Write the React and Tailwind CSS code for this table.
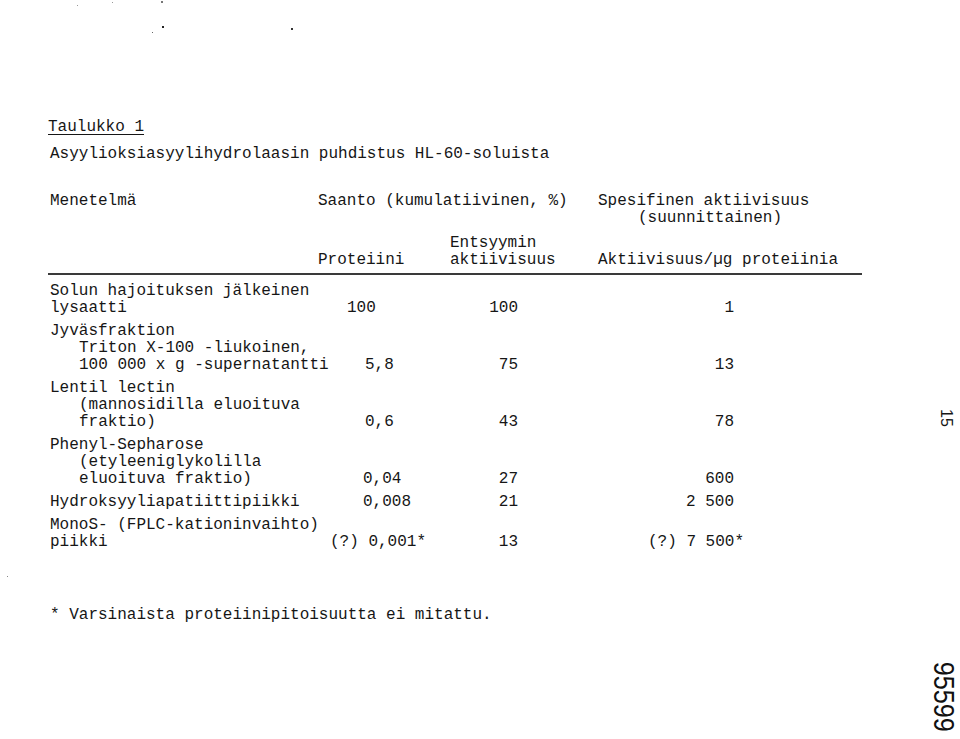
import React from "react";

const rows = [
  {
    lines: ["Solun hajoituksen jälkeinen", "lysaatti"],
    indent: false,
    protein: "100",
    proteinPad: "pl-[29px]",
    enzyme: "100",
    specific: "1",
  },
  {
    lines: ["Jyväsfraktion", "Triton X-100 -liukoinen,", "100 000 x g -supernatantti"],
    indent: true,
    protein: "5,8",
    proteinPad: "pl-[47px]",
    enzyme: "75",
    specific: "13",
  },
  {
    lines: ["Lentil lectin", "(mannosidilla eluoituva", "fraktio)"],
    indent: true,
    protein: "0,6",
    proteinPad: "pl-[47px]",
    enzyme: "43",
    specific: "78",
  },
  {
    lines: ["Phenyl-Sepharose", "(etyleeniglykolilla", "eluoituva fraktio)"],
    indent: true,
    protein: "0,04",
    proteinPad: "pl-[45px]",
    enzyme: "27",
    specific: "600",
  },
  {
    lines: ["Hydroksyyliapatiittipiikki"],
    indent: false,
    protein: "0,008",
    proteinPad: "pl-[45px]",
    enzyme: "21",
    specific: "2 500",
  },
  {
    lines: ["MonoS- (FPLC-kationinvaihto)", "piikki"],
    indent: false,
    protein: "(?) 0,001*",
    proteinPad: "pl-[12px]",
    enzyme: "13",
    specific: "(?) 7 500",
    star: true,
  },
];

const Row = ({ row }) => (
  <div className="grid grid-cols-[268px_132px_148px_1fr] items-end mt-[6px] first:mt-0">
    <div className="whitespace-nowrap">
      {row.lines.map((line, i) => (
        <div key={i} className={i > 0 && row.indent ? "pl-[29px]" : ""}>
          {line}
        </div>
      ))}
    </div>
    <div className={"whitespace-nowrap " + row.proteinPad}>{row.protein}</div>
    <div className="text-right pr-[80px]">{row.enzyme}</div>
    <div className="text-right pr-[128px] whitespace-nowrap">
      {row.specific}
      {row.star && <span className="-mr-[10px]">*</span>}
    </div>
  </div>
);

const App = () => {
  return (
    <div className="relative w-[960px] h-[739px] overflow-hidden bg-white text-[#161616] font-['Liberation_Mono',monospace] text-[16px] leading-[17px]">
      {/* scan specks */}
      <span className="absolute left-[77px] top-[5px] w-[1px] h-[1px] bg-[#999]" />
      <span className="absolute left-[112px] top-[2px] w-[1px] h-[1px] bg-[#999]" />
      <span className="absolute left-[161px] top-[1px] w-[2px] h-[2px] bg-[#777]" />
      <span className="absolute left-[152px] top-[32px] w-[1px] h-[1px] bg-[#666]" />
      <span className="absolute left-[162px] top-[26px] w-[2px] h-[2px] bg-[#222]" />
      <span className="absolute left-[291px] top-[28px] w-[2px] h-[2px] bg-[#333]" />
      <span className="absolute left-[7px] top-[576px] w-[1px] h-[1px] bg-[#888]" />

      <div className="pt-[118px] pl-[48px]">
        <div className="leading-[19px] underline underline-offset-[3px]">Taulukko 1</div>
        <div className="leading-[19px] mt-[8px] pl-[2px]">
          Asyylioksiasyylihydrolaasin puhdistus HL-60-soluista
        </div>
      </div>

      <div className="ml-[48px] w-[814px] mt-[29px]">
        <div className="pl-[2px]">
          <div className="grid grid-cols-[268px_132px_148px_1fr]">
            <div>Menetelmä</div>
            <div className="col-span-2">Saanto (kumulatiivinen, %)</div>
            <div>
              <div>Spesifinen aktiivisuus</div>
              <div className="pl-[40px]">(suunnittainen)</div>
            </div>
          </div>
          <div className="grid grid-cols-[268px_132px_148px_1fr] items-end mt-[8px]">
            <div />
            <div>Proteiini</div>
            <div>
              <div>Entsyymin</div>
              <div>aktiivisuus</div>
            </div>
            <div>Aktiivisuus/µg proteiinia</div>
          </div>
        </div>

        <div className="h-[2px] bg-[#3a3a3a] mt-[4px]" />

        <div className="pl-[2px] mt-[8px]">
          {rows.map((row, i) => (
            <Row key={i} row={row} />
          ))}
        </div>

        <div className="pl-[2px] mt-[56px]">
          * Varsinaista proteiinipitoisuutta ei mitattu.
        </div>
      </div>

      {/* page number */}
      <div className="absolute left-[926px] top-[408px] w-[40px] h-[20px] rotate-90 flex items-center justify-center font-['Liberation_Sans',sans-serif] text-[16px] leading-[20px]">
        15
      </div>

      {/* document number */}
      <div className="absolute left-[894px] top-[679px] w-[100px] h-[36px] rotate-90 flex items-center justify-center">
        <span className="scale-x-[0.84] font-['Liberation_Sans',sans-serif] text-[30px] leading-[36px] text-[#111]">
          95599
        </span>
      </div>
    </div>
  );
};

export default App;
